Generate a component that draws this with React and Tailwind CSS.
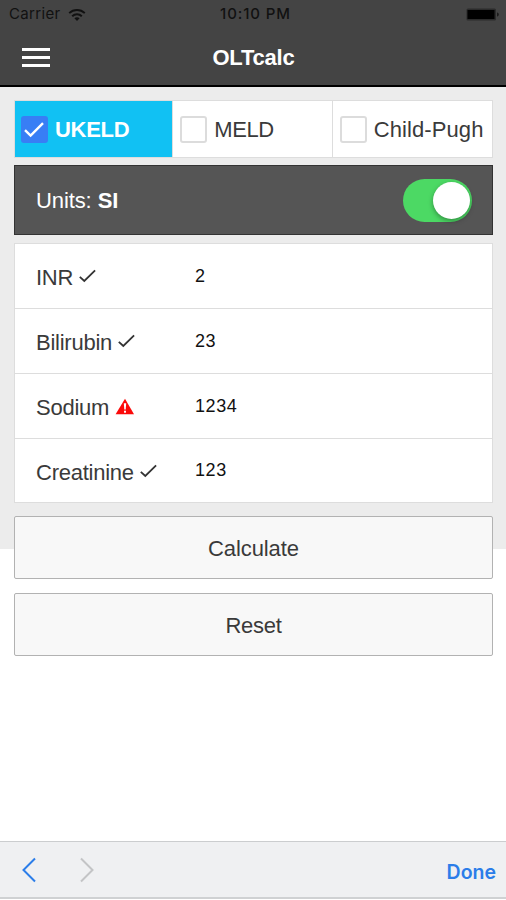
import React, { useState } from 'react';

const CALCULATORS = [
  { id: 'ukeld', label: 'UKELD', width: 'w-[159px]', tracking: 'tracking-[-0.3px]' },
  { id: 'meld', label: 'MELD', width: 'w-[160px]', tracking: 'tracking-[-0.4px]' },
  { id: 'child', label: 'Child-Pugh', width: 'w-[160px]', tracking: 'tracking-[0.1px]' },
];

const FIELDS = [
  { id: 'inr', label: 'INR', value: '2', valid: true },
  { id: 'bilirubin', label: 'Bilirubin', value: '23', valid: true },
  { id: 'sodium', label: 'Sodium', value: '1234', valid: false },
  { id: 'creatinine', label: 'Creatinine', value: '123', valid: true },
];

const WifiIcon = () => (
  <svg width="18" height="14" viewBox="0 0 18 14" fill="none" stroke="#111" strokeWidth="2">
    <path d="M1.2 5.1C5.6.9 12.4.9 16.8 5.1" />
    <path d="M4.2 8.2C6.9 5.6 11.1 5.6 13.8 8.2" />
    <path d="M6.4 10.2C7.9 8.8 10.1 8.8 11.6 10.2L9 12.9Z" fill="#111" stroke="none" />
  </svg>
);

const BatteryIcon = () => (
  <svg width="34" height="13" viewBox="0 0 34 13">
    <rect x="0.5" y="0.5" width="29.5" height="12" rx="1.5" fill="#2b2b2b" />
    <rect x="1.5" y="2" width="27" height="9" fill="#000" />
    <path d="M31 4.5C33.4 5 33.4 8 31 8.5Z" fill="#1c1c1c" />
  </svg>
);

const ValidIcon = () => (
  <svg className="-mt-[3px] ml-[6px]" width="17" height="14" viewBox="0 0 17 14" fill="none" stroke="#333" strokeWidth="1.8">
    <path d="M.8 7.8L5.3 12L16.1 1.4" />
  </svg>
);

const WarningIcon = () => (
  <svg className="-mt-[3px] ml-[6px]" width="20" height="17" viewBox="0 0 20 17">
    <path d="M10 .8L19 16.2H.6Z" fill="#fb0a0a" />
    <path d="M8.8 5.3H11.2L10.7 11.6H9.3Z" fill="#fff" />
    <rect x="9" y="12.7" width="2" height="2" fill="#fff" />
  </svg>
);

const CheckBox = ({ checked }) => (
  <span className={`flex h-[27px] w-[27px] items-center justify-center rounded-[3px] ${checked ? 'bg-[#387ef5]' : 'border-2 border-[#dcdcdc] bg-white'}`}>
    {checked && (
      <svg width="27" height="27" viewBox="0 0 27 27" fill="none" stroke="#fff" strokeWidth="2.4">
        <path d="M4 14.2L9.6 19.6L22 7.2" />
      </svg>
    )}
  </span>
);

const App = () => {
  const [selected, setSelected] = useState('ukeld');
  const [si, setSi] = useState(true);
  const [values, setValues] = useState(Object.fromEntries(FIELDS.map((f) => [f.id, f.value])));

  const handleReset = () => setValues(Object.fromEntries(FIELDS.map((f) => [f.id, ''])));

  return (
    <div className="flex h-[900px] w-[506px] flex-col overflow-hidden bg-white font-['Liberation_Sans',Arial,sans-serif] text-[#3a3a3a]">
      <header className="h-[87px] shrink-0 border-b-2 border-black bg-[#444]">
        <div className="grid h-[28px] grid-cols-3 items-center pl-[9px] pr-[6px] pt-px font-[Inter,sans-serif] text-[15px] text-[#111]">
          <div className="flex items-center gap-[7px]">
            <span className="tracking-[0.35px]">Carrier</span>
            <WifiIcon />
          </div>
          <span className="-mr-[2px] text-center font-medium tracking-[0.9px]">10:10 PM</span>
          <div className="flex justify-end"><BatteryIcon /></div>
        </div>
        <div className="grid h-[57px] grid-cols-3 items-center pl-[22px] pr-[21px]">
          <button className="flex w-[28px] flex-col gap-[5px] pt-[2px]">
            <span className="h-[3px] w-full bg-white" />
            <span className="h-[3px] w-full bg-white" />
            <span className="h-[3px] w-full bg-white" />
          </button>
          <h1 className="pt-px text-center text-[22px] font-bold tracking-[-0.2px] text-white">OLTcalc</h1>
        </div>
      </header>

      <main className="h-[754px] shrink-0">
        <div className="h-[462px] bg-[#ececec] pl-[14px] pr-[13px] pt-[13px]">
          <div className="flex h-[58px] border border-[#ddd] bg-white">
            {CALCULATORS.map((c) => (
              <button
                key={c.id}
                onClick={() => setSelected(c.id)}
                className={`flex items-center border-r border-[#ddd] pl-[7px] text-left text-[22px] last:border-r-0 first:pl-[6px] ${c.width} ${c.tracking} ${selected === c.id ? 'bg-[#11c1f3] font-bold text-white' : 'bg-white'}`}
              >
                <CheckBox checked={selected === c.id} />
                <span className="ml-[7px] whitespace-nowrap">{c.label}</span>
              </button>
            ))}
          </div>

          <div className="mt-[7px] flex h-[70px] items-center justify-between border border-[#333] bg-[#555] pl-[21px] pr-[20px] text-[22px] tracking-[-0.1px] text-white">
            <span>Units: <b>SI</b></span>
            <button onClick={() => setSi(!si)} className={`flex h-[43px] w-[69px] items-center rounded-full px-[2px] ${si ? 'justify-end bg-[#4cd964]' : 'bg-[#ccc]'}`}>
              <span className="h-[37px] w-[37px] rounded-full bg-white shadow-[0_2px_5px_rgba(0,0,0,0.35)]" />
            </button>
          </div>

          <div className="mt-[8px] border border-[#ddd] bg-white">
            {FIELDS.map((f) => (
              <label key={f.id} className="flex h-[65px] items-center border-b border-[#ddd] pl-[21px] last:h-[63px] last:border-b-0">
                <span className="flex w-[159px] items-center pt-[3px] text-[22px] tracking-[-0.25px]">
                  {f.label}
                  {f.valid ? <ValidIcon /> : <WarningIcon />}
                </span>
                <input
                  value={values[f.id]}
                  onChange={(e) => setValues({ ...values, [f.id]: e.target.value })}
                  className="w-[260px] text-[18px] tracking-[0.6px] text-[#111] outline-none"
                />
              </label>
            ))}
          </div>

          <button className="mt-[13px] block h-[63px] w-full rounded-[2px] border border-[#b2b2b2] bg-[#f8f8f8] pt-px text-[22px] tracking-[-0.1px]">Calculate</button>
          <button onClick={handleReset} className="mt-[14px] block h-[63px] w-full rounded-[2px] border border-[#b2b2b2] bg-[#f8f8f8] pt-px text-[22px] tracking-[-0.3px]">Reset</button>
        </div>
      </main>

      <footer className="flex h-[58px] shrink-0 items-center justify-between border-b-2 border-t border-b-[#cfd1d3] border-t-[#cbcdcf] bg-[#eff0f2] pl-[22px] pr-[10px]">
        <div className="flex gap-[44px]">
          <svg width="14" height="26" viewBox="0 0 14 26" fill="none" stroke="#2b7de9" strokeWidth="2">
            <path d="M13 1.5L1.5 13L13 24.5" />
          </svg>
          <svg width="14" height="26" viewBox="0 0 14 26" fill="none" stroke="#c3c4c6" strokeWidth="2">
            <path d="M1 1.5L12.5 13L1 24.5" />
          </svg>
        </div>
        <button className="pt-[6px] font-[Inter,sans-serif] text-[19.5px] font-semibold text-[#2b7de9]">Done</button>
      </footer>
    </div>
  );
};

export default App;
